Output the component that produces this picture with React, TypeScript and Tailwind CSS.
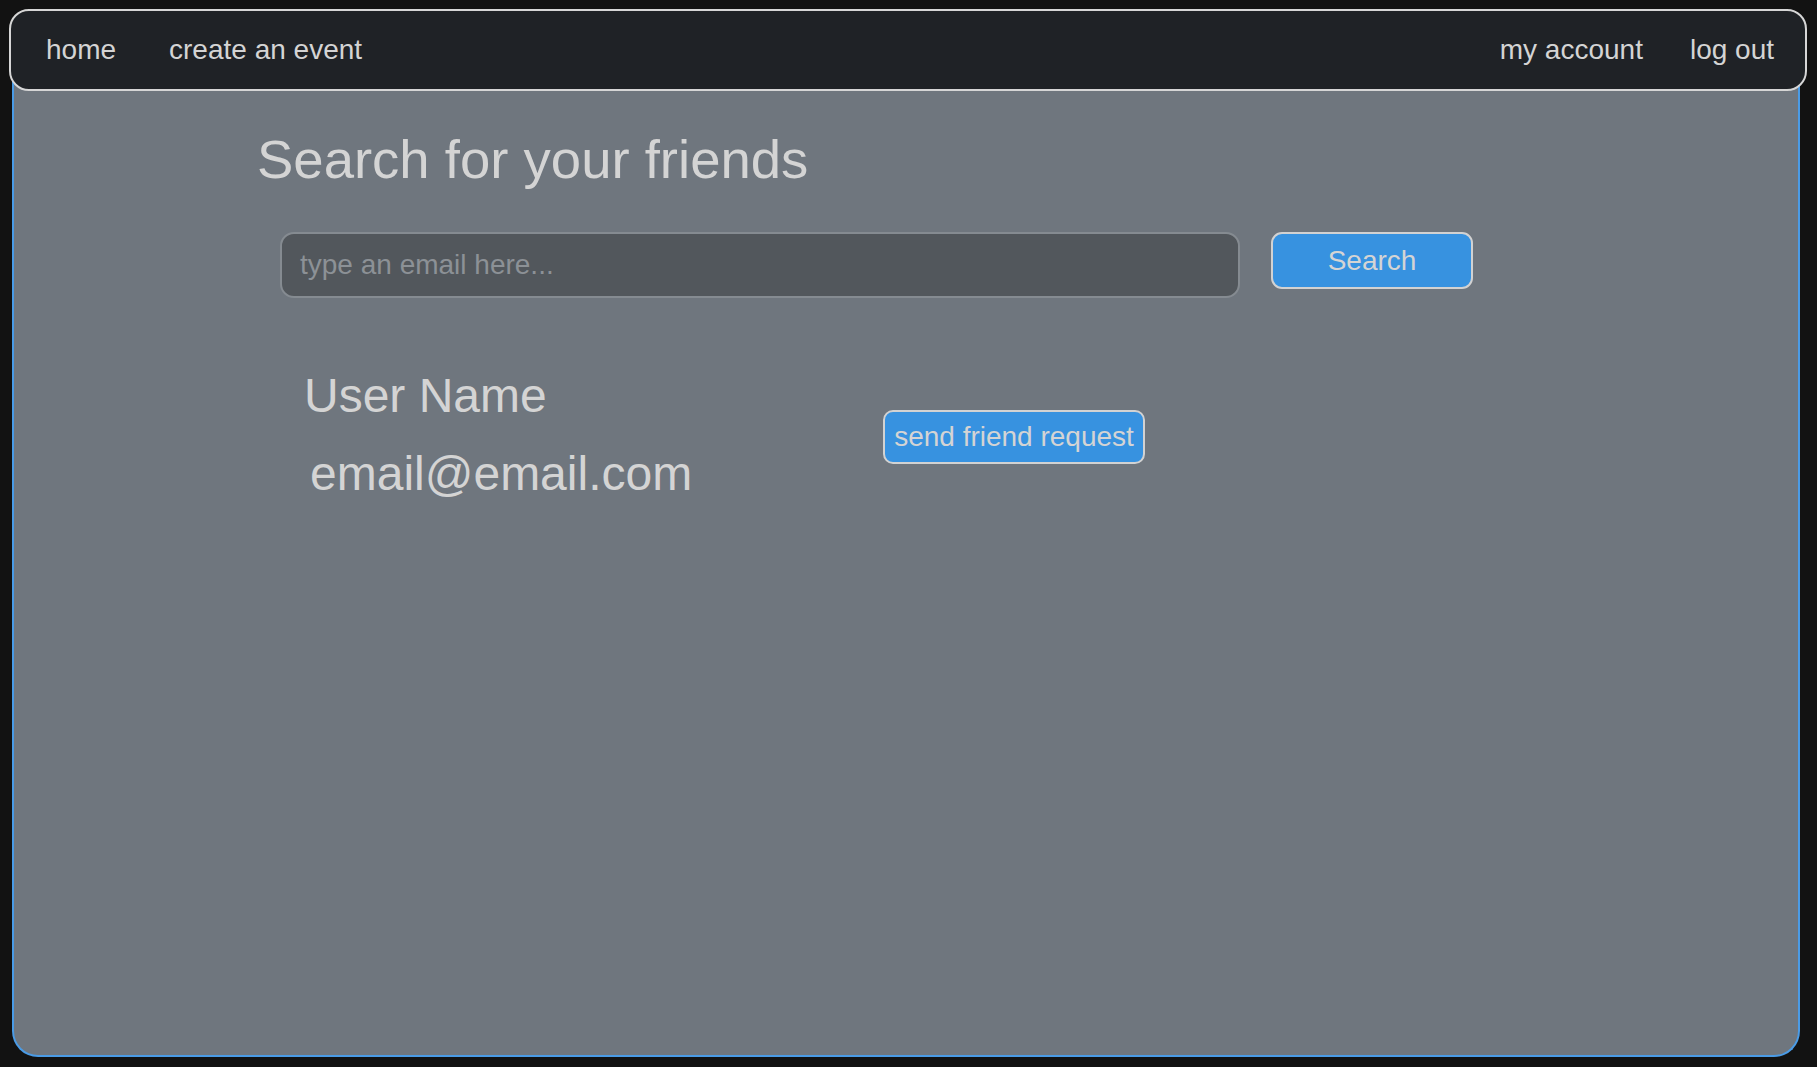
import React from "react";

export default function App() {
  return (
    <div
      className="min-h-screen w-full bg-[#121212] pt-[9px] pb-[10px]"
      style={{ fontFamily: '"Liberation Sans", Arial, sans-serif' }}
    >
      <nav className="relative z-10 ml-[9px] mr-[10px] flex h-[82px] items-center justify-between rounded-[20px] border-2 border-[#d6d6d6] bg-[#1f2226] pl-[35px] pr-[31px] text-[28px] text-[#d4d4d4]">
        <div className="flex items-center gap-[53px]">
          <a className="leading-none">home</a>
          <a className="leading-none">create an event</a>
        </div>
        <div className="flex items-center gap-[47px]">
          <a className="leading-none">my account</a>
          <a className="leading-none">log out</a>
        </div>
      </nav>
      <main className="-mt-[20px] ml-[12px] mr-[17px] h-[986px] rounded-b-[26px] border-2 border-t-0 border-[#4a9be6] bg-[#6f767e] text-[#d4d4d4]">
        <div className="pl-[243px] pt-[58px]">
          <h1 className="text-[54.5px] leading-[62px]">Search for your friends</h1>
          <div className="mt-[41px] flex items-start pl-[23px]">
            <div className="flex h-[66px] w-[960px] items-center rounded-[14px] border-2 border-[#858b91] bg-[#52575c] px-[18px] text-[28px] text-[#8c9196]">
              type an email here...
            </div>
            <button className="ml-[31px] h-[57px] w-[202px] rounded-[11px] border-2 border-[#d2d2d2] bg-[#3792e0] text-[28px] text-[#d4d4d4]">
              Search
            </button>
          </div>
          <div className="mt-[70px] flex items-start pl-[47px]">
            <div className="flex flex-col">
              <div className="text-[48px] leading-[56px]">User Name</div>
              <div className="mt-[22px] pl-[6px] text-[48px] leading-[56px]">email@email.com</div>
            </div>
            <button className="ml-[191px] mt-[42px] h-[54px] rounded-[10px] border-2 border-[#d2d2d2] bg-[#3792e0] px-[9px] text-[28px] leading-none text-[#d4d4d4]">
              send friend request
            </button>
          </div>
        </div>
      </main>
    </div>
  );
}
